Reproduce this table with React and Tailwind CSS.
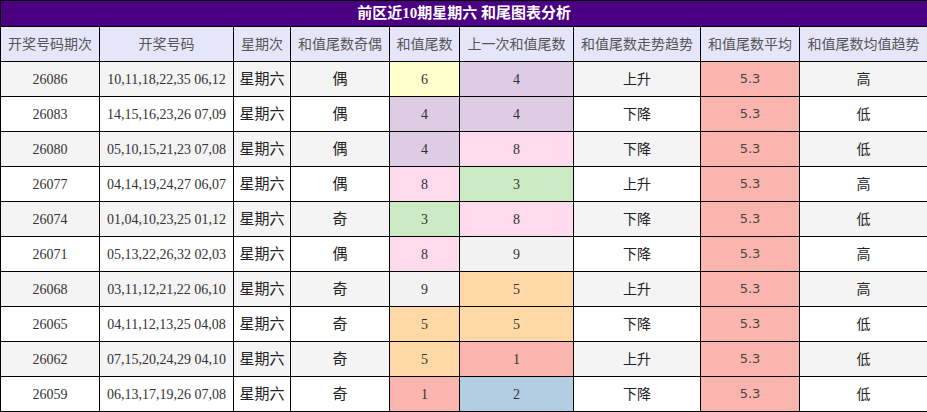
import React from 'react';

const palette = {
  1: 'bg-[#fbb4ae]',
  2: 'bg-[#b3cde3]',
  3: 'bg-[#ccebc5]',
  4: 'bg-[#decbe4]',
  5: 'bg-[#fed9a6]',
  6: 'bg-[#ffffcc]',
  7: 'bg-[#e5d8bd]',
  8: 'bg-[#fddaec]',
  9: 'bg-[#f2f2f2]',
};

const rows = [
  ['26086', '10,11,18,22,35 06,12', '偶', 6, 4, '上升', '高'],
  ['26083', '14,15,16,23,26 07,09', '偶', 4, 4, '下降', '低'],
  ['26080', '05,10,15,21,23 07,08', '偶', 4, 8, '下降', '低'],
  ['26077', '04,14,19,24,27 06,07', '偶', 8, 3, '上升', '高'],
  ['26074', '01,04,10,23,25 01,12', '奇', 3, 8, '下降', '低'],
  ['26071', '05,13,22,26,32 02,03', '偶', 8, 9, '下降', '高'],
  ['26068', '03,11,12,21,22 06,10', '奇', 9, 5, '上升', '高'],
  ['26065', '04,11,12,13,25 04,08', '奇', 5, 5, '下降', '低'],
  ['26062', '07,15,20,24,29 04,10', '奇', 5, 1, '上升', '低'],
  ['26059', '06,13,17,19,26 07,08', '奇', 1, 2, '下降', '低'],
];

const headers = [
  '开奖号码期次',
  '开奖号码',
  '星期次',
  '和值尾数奇偶',
  '和值尾数',
  '上一次和值尾数',
  '和值尾数走势趋势',
  '和值尾数平均',
  '和值尾数均值趋势',
];

const widths = [99, 134, 57, 99, 70, 114, 127, 99, 128];

const cell = 'border border-black text-center align-middle p-0';

export default function App() {
  return (
    <div className="w-[927px] h-[412px] bg-white font-['Liberation_Serif','Noto_Sans_CJK_SC',serif] text-[#333]">
      <table className="w-[927px] table-fixed border-collapse">
        <colgroup>
          {widths.map((w, i) => (
            <col key={i} style={{ width: w }} />
          ))}
        </colgroup>
        <thead>
          <tr className="h-[26px]">
            <th
              colSpan={9}
              className="border border-black bg-[#4b0082] text-[15px] font-bold leading-none text-white"
            >
              前区近10期星期六 和尾图表分析
            </th>
          </tr>
          <tr className="h-[35px] bg-[#e6e6fa]">
            {headers.map((h) => (
              <th key={h} className={`${cell} text-[14px] font-normal text-[#555]`}>
                {h}
              </th>
            ))}
          </tr>
        </thead>
        <tbody>
          {rows.map(([issue, nums, parity, tail, prev, trend, avgTrend], i) => (
            <tr key={issue} className={`h-[35px] ${i % 2 === 0 ? 'bg-[#f4f4f4]' : 'bg-white'}`}>
              <td className={`${cell} text-[14px]`}>{issue}</td>
              <td className={`${cell} text-[14px]`}>{nums}</td>
              <td className={`${cell} text-[15px] text-[#222]`}>星期六</td>
              <td className={`${cell} text-[15px] text-[#222]`}>{parity}</td>
              <td className={`${cell} text-[14px] ${palette[tail]}`}>{tail}</td>
              <td className={`${cell} text-[14px] ${palette[prev]}`}>{prev}</td>
              <td className={`${cell} text-[14px] text-[#222]`}>{trend}</td>
              <td className={`${cell} bg-[#fbb4ae] font-['DejaVu_Sans',sans-serif] text-[13px] text-[#444]`}>
                5.3
              </td>
              <td className={`${cell} text-[14px] text-[#222]`}>{avgTrend}</td>
            </tr>
          ))}
        </tbody>
      </table>
    </div>
  );
}
